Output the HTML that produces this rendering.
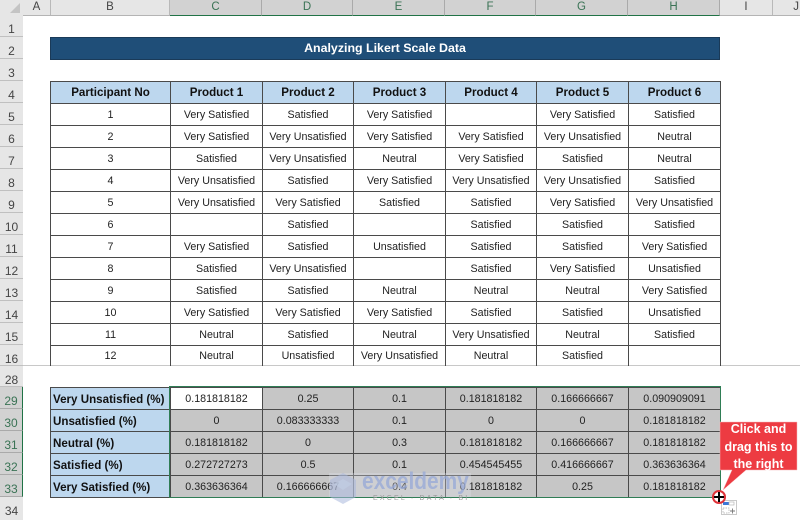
<!DOCTYPE html>
<html><head><meta charset="utf-8">
<style>
html,body{margin:0;padding:0;background:#fff}
body{width:800px;height:520px;position:relative;overflow:hidden;font-family:"Liberation Sans",sans-serif;color:#222;filter:blur(.25px)}
.a{position:absolute}
.hb{position:absolute;top:0;left:0;width:800px;height:15px;background:#e6e6e6;border-bottom:1px solid #b4b4b4}
.ch{position:absolute;top:0;height:15px;line-height:15px;text-align:center;font-size:11.500px;color:#444;border-right:1px solid #b9b9b9;box-sizing:border-box}
.ch.s{background:#d2d2d2;color:#3a7355;border-bottom:1.5px solid #217346;height:16px;border-right:1px solid #aaa}
.rb{position:absolute;top:15px;left:0;width:23px;height:505px;background:#e6e6e6}
.rh{position:absolute;left:0;width:23px;height:22px;line-height:28px;text-align:center;font-size:12px;color:#444;border-bottom:1px solid #c0c0c0;box-sizing:border-box;overflow:hidden}
.rh.s{background:#d2d2d2;color:#3a7355;border-right:1px solid #217346;border-bottom:1px solid #aaa}
table{position:absolute;border-collapse:collapse;table-layout:fixed;font-size:10.700px}
td{border:1px solid #4a4a4a;padding:0;text-align:center;height:21px;white-space:nowrap;overflow:hidden;color:#222}
.h td{background:#bdd7ee;font-weight:bold;font-size:11.600px;color:#111}
.l{background:#bdd7ee;font-weight:bold;text-align:left;padding-left:2px;font-size:11.600px;color:#111}
.g td{padding-top:1px;height:20px}
.g td.v{background:#c6c6c6}
td.w{background:#fff!important}
</style></head><body>
<div class="hb"></div>
<svg class="a" style="left:10px;top:3px" width="10" height="10"><polygon points="10,0 10,10 0,10" fill="#c4c4c4"/></svg>
<div class="ch" style="left:23px;width:28px">A</div>
<div class="ch" style="left:51px;width:119px">B</div>
<div class="ch s" style="left:170px;width:92px">C</div>
<div class="ch s" style="left:262px;width:91px">D</div>
<div class="ch s" style="left:353px;width:92px">E</div>
<div class="ch s" style="left:445px;width:91px">F</div>
<div class="ch s" style="left:536px;width:92px">G</div>
<div class="ch s" style="left:628px;width:92px">H</div>
<div class="ch" style="left:720px;width:53px">I</div>
<div class="ch" style="left:773px;width:27px;border-right:0;text-align:right;padding-right:1px">J</div>

<div class="rb"></div>
<div class="rh" style="top:15px">1</div>
<div class="rh" style="top:37px">2</div>
<div class="rh" style="top:59px">3</div>
<div class="rh" style="top:81px">4</div>
<div class="rh" style="top:103px">5</div>
<div class="rh" style="top:125px">6</div>
<div class="rh" style="top:147px">7</div>
<div class="rh" style="top:169px">8</div>
<div class="rh" style="top:191px">9</div>
<div class="rh" style="top:213px">10</div>
<div class="rh" style="top:235px">11</div>
<div class="rh" style="top:257px">12</div>
<div class="rh" style="top:279px">13</div>
<div class="rh" style="top:301px">14</div>
<div class="rh" style="top:323px">15</div>
<div class="rh" style="top:345px;height:21px">16</div>
<div class="rh" style="top:366px;height:21px">28</div>
<div class="rh s" style="top:387px">29</div>
<div class="rh s" style="top:409px">30</div>
<div class="rh s" style="top:431px">31</div>
<div class="rh s" style="top:453px">32</div>
<div class="rh s" style="top:475px">33</div>
<div class="rh" style="top:497px;border-bottom:0">34</div>
<div class="a" style="left:23px;top:365px;width:777px;height:1px;background:#c8c8c8"></div>

<div class="a" style="left:50px;top:37px;width:670px;height:23px;box-sizing:border-box;background:#1f4e78;border:1px solid #1a3a58;color:#fff;font-weight:bold;font-size:12.400px;text-align:center;line-height:21px">Analyzing Likert Scale Data</div>

<table style="left:50px;top:81px;width:670px">
<colgroup><col style="width:120px"><col style="width:92px"><col style="width:91px"><col style="width:92px"><col style="width:91px"><col style="width:92px"><col style="width:92px"></colgroup>
<tr class="h"><td>Participant No</td><td>Product 1</td><td>Product 2</td><td>Product 3</td><td>Product 4</td><td>Product 5</td><td>Product 6</td></tr>
<tr><td>1</td><td>Very Satisfied</td><td>Satisfied</td><td>Very Satisfied</td><td></td><td>Very Satisfied</td><td>Satisfied</td></tr>
<tr><td>2</td><td>Very Satisfied</td><td>Very Unsatisfied</td><td>Very Satisfied</td><td>Very Satisfied</td><td>Very Unsatisfied</td><td>Neutral</td></tr>
<tr><td>3</td><td>Satisfied</td><td>Very Unsatisfied</td><td>Neutral</td><td>Very Satisfied</td><td>Satisfied</td><td>Neutral</td></tr>
<tr><td>4</td><td>Very Unsatisfied</td><td>Satisfied</td><td>Very Satisfied</td><td>Very Unsatisfied</td><td>Very Unsatisfied</td><td>Satisfied</td></tr>
<tr><td>5</td><td>Very Unsatisfied</td><td>Very Satisfied</td><td>Satisfied</td><td>Satisfied</td><td>Very Satisfied</td><td>Very Unsatisfied</td></tr>
<tr><td>6</td><td></td><td>Satisfied</td><td></td><td>Satisfied</td><td>Satisfied</td><td>Satisfied</td></tr>
<tr><td>7</td><td>Very Satisfied</td><td>Satisfied</td><td>Unsatisfied</td><td>Satisfied</td><td>Satisfied</td><td>Very Satisfied</td></tr>
<tr><td>8</td><td>Satisfied</td><td>Very Unsatisfied</td><td></td><td>Satisfied</td><td>Very Satisfied</td><td>Unsatisfied</td></tr>
<tr><td>9</td><td>Satisfied</td><td>Satisfied</td><td>Neutral</td><td>Neutral</td><td>Neutral</td><td>Very Satisfied</td></tr>
<tr><td>10</td><td>Very Satisfied</td><td>Very Satisfied</td><td>Very Satisfied</td><td>Satisfied</td><td>Satisfied</td><td>Unsatisfied</td></tr>
<tr><td>11</td><td>Neutral</td><td>Satisfied</td><td>Neutral</td><td>Very Unsatisfied</td><td>Neutral</td><td>Satisfied</td></tr>
<tr><td style="border-bottom:0;height:20px">12</td><td style="border-bottom:0;height:20px">Neutral</td><td style="border-bottom:0;height:20px">Unsatisfied</td><td style="border-bottom:0;height:20px">Very Unsatisfied</td><td style="border-bottom:0;height:20px">Neutral</td><td style="border-bottom:0;height:20px">Satisfied</td><td style="border-bottom:0;height:20px"></td></tr>
</table>

<table class="g" style="left:50px;top:387px;width:670px">
<colgroup><col style="width:120px"><col style="width:92px"><col style="width:91px"><col style="width:92px"><col style="width:91px"><col style="width:92px"><col style="width:92px"></colgroup>
<tr><td class="l">Very Unsatisfied (%)</td><td class="v w">0.181818182</td><td class="v">0.25</td><td class="v">0.1</td><td class="v">0.181818182</td><td class="v">0.166666667</td><td class="v">0.090909091</td></tr>
<tr><td class="l">Unsatisfied (%)</td><td class="v">0</td><td class="v">0.083333333</td><td class="v">0.1</td><td class="v">0</td><td class="v">0</td><td class="v">0.181818182</td></tr>
<tr><td class="l">Neutral (%)</td><td class="v">0.181818182</td><td class="v">0</td><td class="v">0.3</td><td class="v">0.181818182</td><td class="v">0.166666667</td><td class="v">0.181818182</td></tr>
<tr><td class="l">Satisfied (%)</td><td class="v">0.272727273</td><td class="v">0.5</td><td class="v">0.1</td><td class="v">0.454545455</td><td class="v">0.416666667</td><td class="v">0.363636364</td></tr>
<tr><td class="l">Very Satisfied (%)</td><td class="v">0.363636364</td><td class="v">0.166666667</td><td class="v">0.4</td><td class="v">0.181818182</td><td class="v">0.25</td><td class="v">0.181818182</td></tr>
</table>
<div class="a" style="left:169px;top:386px;width:551.500px;height:112px;box-sizing:border-box;border:1.500px solid #2f7d55"></div>

<div class="a" style="left:329px;top:473px;width:142px;height:24px;background:rgba(225,230,240,.3)"></div>
<svg class="a" style="left:328px;top:472px" width="30" height="34"><polygon points="15,1 28,8 28,25 15,32 2,25 2,8" fill="#a9b8dc" opacity=".55"/><polygon points="15,7 24,12 15,18 6,12" fill="#c3cee6" opacity=".6"/></svg>
<div class="a" style="left:362px;top:468px;font-size:24px;font-weight:bold;color:#95a8d8;opacity:.72;line-height:28px;transform:scaleX(.87);transform-origin:left top;white-space:nowrap">exceldemy</div>
<div class="a" style="left:373px;top:494px;font-size:7px;color:#999;letter-spacing:2.200px;line-height:9px;white-space:nowrap">EXCEL · DATA · BI</div>

<svg class="a" style="left:700px;top:420px" width="100" height="100">
<polygon points="20,2 97,2 97,50 46,50 23,70 32,50 20,50" fill="#ed3b42" stroke="#f6b8ba" stroke-width=".5"/>
<rect x="21.500" y="80.500" width="15" height="14" fill="#fff" stroke="#c9c9c9"/>
<rect x="23" y="82" width="6" height="3" fill="#3b78d8"/><rect x="29" y="82" width="5" height="3" fill="#fff" stroke="#aaa" stroke-width=".6"/>
<rect x="23" y="88" width="6" height="5" fill="none" stroke="#aaa" stroke-width=".7" stroke-dasharray="1.500 1"/>
<path d="M30 91h5M32.500 88.500v5" stroke="#777" stroke-width=".9"/>
<circle cx="19" cy="77" r="6" fill="#fff" stroke="#e0333a" stroke-width="2"/>
<path d="M14 77h10M19 72v10" stroke="#000" stroke-width="2"/>
</svg>
<div class="a" style="left:720px;top:421px;width:77px;text-align:center;color:#fff;font-weight:bold;font-size:12.500px;line-height:17.500px">Click and drag this to the right</div>
</body></html>
